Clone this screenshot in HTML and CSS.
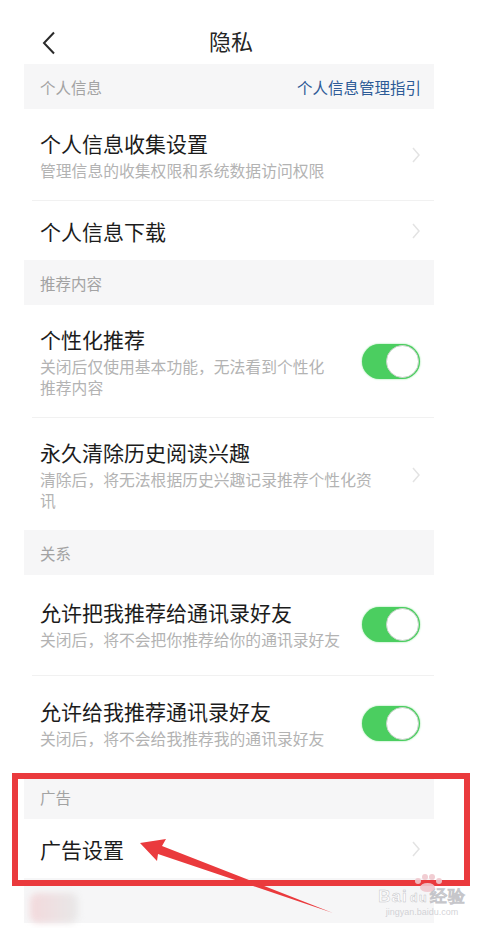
FILE: index.html
```html
<!DOCTYPE html>
<html>
<head>
    <meta charset="utf-8">
    <title>隐私</title>
    <link rel="stylesheet" href="styles.css">
</head>
<body>
    <div class="page">
        <div class="header">
            <svg class="back" width="14" height="24" viewBox="0 0 14 24">
                <path d="M12 1.5 L2 12 L12 22.5" fill="none" stroke="#2a2a2a" stroke-width="2"/>
            </svg>
            <h1>隐私</h1>
        </div>

        <div class="section">
            <span>个人信息</span>
            <a class="guide">个人信息管理指引</a>
        </div>
        <div class="row">
            <div class="row-text">
                <div class="row-title">个人信息收集设置</div>
                <div class="row-desc">管理信息的收集权限和系统数据访问权限</div>
            </div>
            <svg class="chevron" width="10" height="18" viewBox="0 0 10 18"><path d="M2 2 L8 9 L2 16" fill="none" stroke="#e3e3e3" stroke-width="1.5"/></svg>
        </div>
        <div class="row single">
            <div class="row-text">
                <div class="row-title">个人信息下载</div>
            </div>
            <svg class="chevron" width="10" height="18" viewBox="0 0 10 18"><path d="M2 2 L8 9 L2 16" fill="none" stroke="#e3e3e3" stroke-width="1.5"/></svg>
        </div>

        <div class="section">
            <span>推荐内容</span>
        </div>
        <div class="row">
            <div class="row-text">
                <div class="row-title">个性化推荐</div>
                <div class="row-desc">关闭后仅使用基本功能，无法看到个性化<br>推荐内容</div>
            </div>
            <div class="switch"><span class="knob"></span></div>
        </div>
        <div class="row">
            <div class="row-text">
                <div class="row-title">永久清除历史阅读兴趣</div>
                <div class="row-desc">清除后，将无法根据历史兴趣记录推荐个性化资<br>讯</div>
            </div>
            <svg class="chevron" width="10" height="18" viewBox="0 0 10 18"><path d="M2 2 L8 9 L2 16" fill="none" stroke="#e3e3e3" stroke-width="1.5"/></svg>
        </div>

        <div class="section">
            <span>关系</span>
        </div>
        <div class="row loose">
            <div class="row-text">
                <div class="row-title">允许把我推荐给通讯录好友</div>
                <div class="row-desc">关闭后，将不会把你推荐给你的通讯录好友</div>
            </div>
            <div class="switch"><span class="knob"></span></div>
        </div>
        <div class="row loose last">
            <div class="row-text">
                <div class="row-title">允许给我推荐通讯录好友</div>
                <div class="row-desc">关闭后，将不会给我推荐我的通讯录好友</div>
            </div>
            <div class="switch"><span class="knob"></span></div>
        </div>

        <div class="section">
            <span>广告</span>
        </div>
        <div class="row single">
            <div class="row-text">
                <div class="row-title">广告设置</div>
            </div>
            <svg class="chevron" width="10" height="18" viewBox="0 0 10 18"><path d="M2 2 L8 9 L2 16" fill="none" stroke="#e3e3e3" stroke-width="1.5"/></svg>
        </div>

        <div class="section">
            <span class="smudge"></span>
        </div>
    </div>

    <!-- annotation marks drawn over the screenshot -->
    <div class="frame"></div>
    <svg class="arrow" width="493" height="928" viewBox="0 0 493 928">
        <polygon points="140,843 166,839 162,846 333,913 158,854 157,861" fill="#ea3a3d"/>
    </svg>
    <div class="watermark">
        <div class="paw"><i></i><i></i><i></i><i></i><b></b></div>
        <div class="wm-logo">Bai<span class="du">du</span>经验</div>
        <div class="wm-url">jingyan.baidu.com</div>
    </div>
</body>
</html>
```

FILE: styles.css
```css
html, body {
    margin: 0;
    height: 928px;
    overflow: hidden;
    background: #fff;
}
body {
    position: relative;
    font-family: "Noto Sans CJK SC", "Noto Sans", sans-serif;
    color: #1e1e1e;
}
.page {
    width: 410px;
    margin-left: 24px;
}

.header {
    height: 64px;
    display: flex;
    align-items: center;
    justify-content: center;
    position: relative;
}
.header h1 {
    margin: 15px 0 0 4px;
    font-size: 22px;
    font-weight: 400;
    color: #262626;
}
.back {
    position: absolute;
    left: 18px;
    top: 31px;
}

.section {
    height: 45px;
    background: #f6f6f7;
    display: flex;
    align-items: center;
    justify-content: space-between;
    padding: 0 13px 0 16px;
    font-size: 15.5px;
    color: #a3a3a3;
}
.guide {
    color: #2d5b97;
}

.row {
    display: flex;
    align-items: center;
    margin-left: 8px;
    padding: 20px 11px 19px 8px;
}
.row + .row {
    border-top: 1px solid #f1f1f1;
}
.row.single {
    padding-top: 16px;
    padding-bottom: 15px;
}
.row.loose {
    padding-top: 23px;
    padding-bottom: 25px;
}
.row.last {
    padding-top: 21px;
}
.row-text {
    flex: 1;
}
.row-title {
    font-size: 21px;
    line-height: 28px;
    color: #1c1c1c;
}
.row-desc {
    margin-top: 3px;
    font-size: 15.8px;
    line-height: 21px;
    color: #b3b3b3;
}
.chevron {
    margin-right: 2px;
}

.switch {
    width: 58px;
    height: 35px;
    margin-right: 3px;
    border-radius: 18px;
    background: #4bce60;
    position: relative;
    box-shadow: 0 0 2px #7fe08c;
}
.knob {
    position: absolute;
    right: 1px;
    top: 1px;
    width: 31px;
    height: 31px;
    border-radius: 50%;
    background: #fff;
    border: 1px solid #c9d3ca;
}

.smudge {
    width: 48px;
    height: 30px;
    margin: 14px 0 0 -10px;
    border-radius: 8px;
    background: linear-gradient(90deg, #f3d9dc, #e8e8e8);
    filter: blur(3px);
}

.frame {
    position: absolute;
    left: 12px;
    top: 773px;
    width: 458px;
    height: 113px;
    box-sizing: border-box;
    border: 6px solid #ea3a3d;
}
.arrow {
    position: absolute;
    left: 0;
    top: 0;
}

.watermark {
    position: absolute;
    left: 374px;
    top: 874px;
    width: 96px;
    text-align: center;
    color: rgba(205, 205, 210, 0.85);
}
.paw {
    position: relative;
    height: 14px;
}
.paw i {
    position: absolute;
    width: 6px;
    height: 6px;
    border-radius: 50%;
    background: rgba(240, 200, 205, 0.9);
}
.paw i:nth-child(1) { left: 41px; top: 4px; }
.paw i:nth-child(2) { left: 48px; top: 0; }
.paw i:nth-child(3) { left: 55px; top: 0; }
.paw i:nth-child(4) { left: 62px; top: 4px; }
.paw b {
    position: absolute;
    left: 46px;
    top: 9px;
    width: 15px;
    height: 9px;
    border-radius: 50%;
    background: rgba(240, 200, 205, 0.9);
}
.wm-logo {
    font-family: "Liberation Sans", sans-serif;
    font-size: 17px;
    font-weight: 700;
    line-height: 18px;
    letter-spacing: 1px;
    -webkit-text-stroke: 0.5px rgba(190, 190, 195, 0.9);
    color: rgba(255, 255, 255, 0.6);
}
.wm-logo .du {
    font-size: 13px;
    border-radius: 50%;
    padding: 0 2px;
}
.wm-url {
    font-family: "Liberation Sans", sans-serif;
    font-size: 9px;
    color: rgba(200, 200, 205, 0.8);
}
```
